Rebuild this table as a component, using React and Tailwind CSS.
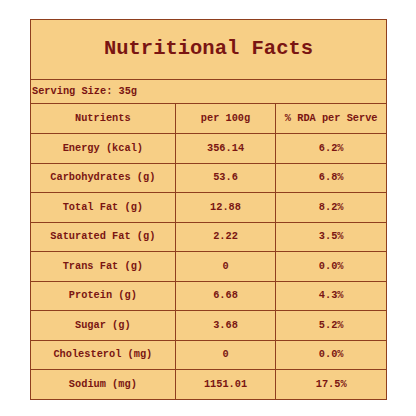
import React from 'react'

const rows = [
  ['Energy (kcal)', '356.14', '6.2%'],
  ['Carbohydrates (g)', '53.6', '6.8%'],
  ['Total Fat (g)', '12.88', '8.2%'],
  ['Saturated Fat (g)', '2.22', '3.5%'],
  ['Trans Fat (g)', '0', '0.0%'],
  ['Protein (g)', '6.68', '4.3%'],
  ['Sugar (g)', '3.68', '5.2%'],
  ['Cholesterol (mg)', '0', '0.0%'],
  ['Sodium (mg)', '1151.01', '17.5%'],
]

const cell = 'border border-[#8f3f1e] text-center font-bold h-[29.5px] p-0'

export default function App() {
  return (
    <div className="w-[416px] h-[416px] bg-white pt-[19px] pl-[30px]">
      <table
        className="border-collapse bg-[#f7cf86] text-[#7a1512] text-[10.3px] w-[357px] border border-[#b56a45]"
        style={{ fontFamily: '"Liberation Mono", "Courier New", monospace' }}
      >
        <colgroup>
          <col className="w-[145px]" />
          <col className="w-[101px]" />
          <col className="w-[111px]" />
        </colgroup>
        <tbody>
          <tr>
            <td colSpan={3} className="border border-[#8f3f1e] h-[60px] text-center font-bold text-[20.5px] p-0">
              Nutritional Facts
            </td>
          </tr>
          <tr>
            <td colSpan={3} className="border border-[#8f3f1e] h-[24px] text-left font-bold pl-[1px] p-0">
              Serving Size: 35g
            </td>
          </tr>
          <tr>
            <td className={cell + ' h-[30px]'}>Nutrients</td>
            <td className={cell + ' h-[30px]'}>per 100g</td>
            <td className={cell + ' h-[30px]'}>% RDA per Serve</td>
          </tr>
          {rows.map(([name, per100, rda]) => (
            <tr key={name}>
              <td className={cell}>{name}</td>
              <td className={cell}>{per100}</td>
              <td className={cell}>{rda}</td>
            </tr>
          ))}
        </tbody>
      </table>
    </div>
  )
}
